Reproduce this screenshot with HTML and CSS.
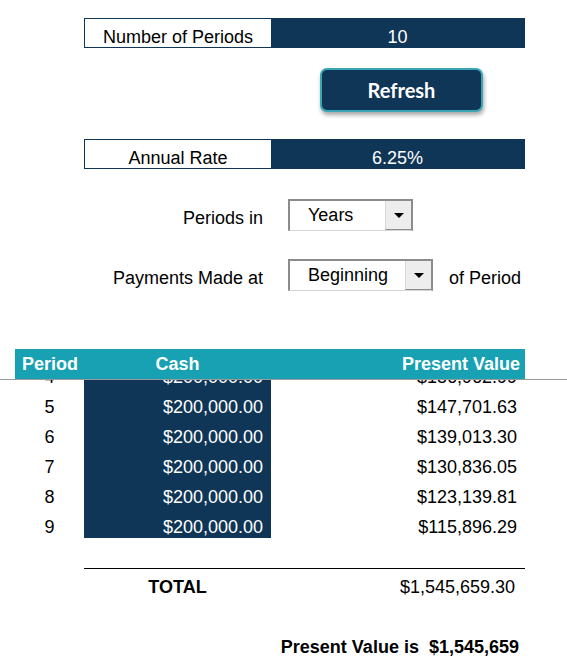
FILE: index.html
```html
<!DOCTYPE html>
<html lang="en">
<head>
    <meta charset="UTF-8">
    <meta name="viewport" content="width=device-width, initial-scale=1.0">
    <title>Present Value Calculator</title>
    <link rel="stylesheet" href="styles.css">
</head>
<body>
    <div class="sheet">
        <!-- Inputs -->
        <div class="input-row periods-row">
            <div class="input-label">Number of Periods</div>
            <div class="input-value">10</div>
        </div>

        <button class="refresh-btn">Refresh</button>

        <div class="input-row rate-row">
            <div class="input-label">Annual Rate</div>
            <div class="input-value">6.25%</div>
        </div>

        <div class="option-row unit-row">
            <span class="option-label">Periods in</span>
            <div class="dropdown dropdown-short">
                <span class="dropdown-text">Years</span>
                <span class="dropdown-arrow"><i class="caret"></i></span>
            </div>
        </div>

        <div class="option-row timing-row">
            <span class="option-label">Payments Made at</span>
            <div class="dropdown dropdown-long">
                <span class="dropdown-text">Beginning</span>
                <span class="dropdown-arrow"><i class="caret"></i></span>
            </div>
            <span class="option-suffix">of Period</span>
        </div>

        <!-- Cash flow table (frozen header, rows scrolled) -->
        <div class="flow-table">
            <div class="flow-header">
                <span class="col-period">Period</span>
                <span class="col-cash">Cash</span>
                <span class="col-pv">Present Value</span>
            </div>
            <div class="freeze-line"></div>
            <div class="flow-viewport">
                <div class="flow-rows">
                    <div class="flow-row"><span class="col-period">4</span><span class="col-cash">$200,000.00</span><span class="col-pv">$156,962.99</span></div>
                    <div class="flow-row"><span class="col-period">5</span><span class="col-cash">$200,000.00</span><span class="col-pv">$147,701.63</span></div>
                    <div class="flow-row"><span class="col-period">6</span><span class="col-cash">$200,000.00</span><span class="col-pv">$139,013.30</span></div>
                    <div class="flow-row"><span class="col-period">7</span><span class="col-cash">$200,000.00</span><span class="col-pv">$130,836.05</span></div>
                    <div class="flow-row"><span class="col-period">8</span><span class="col-cash">$200,000.00</span><span class="col-pv">$123,139.81</span></div>
                    <div class="flow-row"><span class="col-period">9</span><span class="col-cash">$200,000.00</span><span class="col-pv">$115,896.29</span></div>
                </div>
            </div>
        </div>

        <div class="total-row">
            <span class="col-cash total-label">TOTAL</span>
            <span class="col-pv">$1,545,659.30</span>
        </div>

        <div class="summary">Present Value is  $1,545,659</div>
    </div>
</body>
</html>
```

FILE: styles.css
```css
/* Global Styles */
body, html {
    margin: 0;
    padding: 0;
    background-color: #fff;
    font-family: 'Liberation Sans', Arial, sans-serif;
    font-size: 18px;
    color: #000;
}

.sheet {
    padding-top: 18px;
    width: 567px;
}

/* Input boxes */
.input-row {
    display: flex;
    margin-left: 84px;
    width: 441px;
    height: 30px;
    box-sizing: border-box;
    border: 1px solid #0f3557;
}

.rate-row {
    margin-top: 27px;
}

.input-label,
.input-value {
    text-align: center;
    line-height: 22px;
    padding-top: 7px;
}

.input-label {
    width: 186px;
    background-color: #fff;
}

.input-value {
    flex-grow: 1;
    background-color: #0f3557;
    color: #fff;
}

/* Refresh button */
.refresh-btn {
    display: block;
    margin: 20px 0 0 320px;
    width: 163px;
    height: 44px;
    background-color: #0f3557;
    color: #fff;
    border: 2px solid #3aa6b5;
    border-radius: 7px;
    box-shadow: 1px 3px 4px rgba(0, 0, 0, 0.35);
    font-family: 'Lato', 'Open Sans', sans-serif;
    font-weight: bold;
    font-size: 20px;
    cursor: pointer;
}

/* Dropdown options */
.option-row {
    display: flex;
    align-items: flex-start;
    height: 32px;
}

.unit-row {
    margin-top: 30px;
}

.timing-row {
    margin-top: 28px;
}

.option-label {
    width: 263px;
    margin-right: 25px;
    text-align: right;
    line-height: 32px;
    padding-top: 3px;
}

.option-suffix {
    margin-left: 16px;
    line-height: 32px;
    padding-top: 3px;
}

.dropdown {
    display: flex;
    height: 32px;
    box-sizing: border-box;
    border-top: 2px solid #8c8c8c;
    border-left: 2px solid #8c8c8c;
    border-right: 2px solid #8c8c8c;
    border-bottom: 1px solid #d4d4d4;
    background-color: #fff;
}

.dropdown-short {
    width: 125px;
}

.dropdown-long {
    width: 145px;
}

.dropdown-text {
    flex-grow: 1;
    padding-left: 18px;
    line-height: 28px;
}

.dropdown-arrow {
    width: 25px;
    background-color: #ededed;
    border-left: 1px solid #d8d8d8;
    border-bottom: 1px solid #8c8c8c;
    display: flex;
    align-items: center;
    justify-content: center;
}

.caret {
    width: 0;
    height: 0;
    border-left: 5px solid transparent;
    border-right: 5px solid transparent;
    border-top: 5px solid #000;
}

/* Cash flow table */
.flow-table {
    margin-top: 58px;
}

.col-period {
    width: 69px;
    box-sizing: border-box;
    text-align: center;
}

.col-cash {
    width: 187px;
    box-sizing: border-box;
    text-align: center;
}

.col-pv {
    flex-grow: 1;
    text-align: right;
    padding-right: 8px;
}

.flow-header {
    display: flex;
    margin-left: 15px;
    width: 510px;
    height: 30px;
    box-sizing: border-box;
    background-color: #17a1b2;
    color: #fff;
    font-weight: bold;
    line-height: 25px;
    padding-top: 3px;
}

.flow-header .col-period {
    text-align: left;
    padding-left: 7px;
}

.flow-header .col-pv {
    padding-right: 5px;
}

.freeze-line {
    height: 1px;
    background-color: #9a9a9a;
}

.flow-viewport {
    height: 158px;
    overflow: hidden;
}

.flow-rows {
    margin-top: -22px;
}

.flow-row {
    display: flex;
    height: 30px;
    margin-left: 15px;
    width: 510px;
    line-height: 21px;
}

.flow-row span {
    padding-top: 9px;
}

.flow-row .col-cash {
    background-color: #0f3557;
    color: #fff;
    text-align: right;
    padding-right: 8px;
}

/* Totals */
.total-row {
    display: flex;
    height: 30px;
    box-sizing: border-box;
    margin: 30px 0 0 84px;
    width: 441px;
    border-top: 1px solid #000;
    line-height: 21px;
    padding-top: 8px;
}

.total-label {
    font-weight: bold;
}

.total-row .col-pv {
    padding-right: 10px;
}

.summary {
    margin-top: 30px;
    width: 519px;
    text-align: right;
    white-space: pre;
    font-weight: bold;
    line-height: 21px;
    padding-top: 9px;
}
```
